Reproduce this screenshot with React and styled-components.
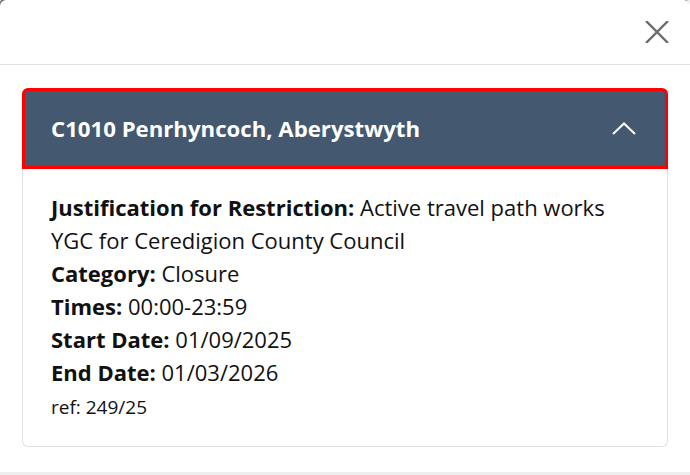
import React from "react";
import styled, { createGlobalStyle } from "styled-components";

const GlobalStyle = createGlobalStyle`
  html, body {
    margin: 0;
    padding: 0;
    background: #eceef0;
  }
  body {
    font-family: "Open Sans", "Noto Sans", sans-serif;
    color: #111;
  }
`;

const Modal = styled.div`
  width: 690px;
  height: 472px;
  background: #fff;
  border-radius: 6px 6px 0 0;
  box-shadow: -1px -1px 0 #666;
  overflow: hidden;
`;

const ModalHeader = styled.div`
  height: 65px;
  border-bottom: 1px solid #dee2e6;
  display: flex;
  align-items: center;
  justify-content: flex-end;
  padding: 0 19px 0 0;
  box-sizing: border-box;
`;

const CloseButton = styled.button`
  width: 28px;
  height: 28px;
  border: none;
  background: none;
  padding: 0;
  display: flex;
  align-items: center;
  justify-content: center;
  cursor: pointer;
`;

const ModalBody = styled.div`
  padding: 23px 22px 0 22px;
`;

const Card = styled.section`
  display: flex;
  flex-direction: column;
`;

const CardHeader = styled.div`
  height: 81px;
  box-sizing: border-box;
  border: 3px solid #ff0000;
  border-radius: 6px 6px 0 0;
  background: #44586f;
  color: #fff;
  display: flex;
  align-items: center;
  justify-content: space-between;
  padding: 0 29px 0 26px;
`;

const Title = styled.h2`
  margin: 0;
  font-size: 22.2px;
  font-weight: 700;
  letter-spacing: 0;
`;

const CardBody = styled.div`
  border: 1px solid #dee2e6;
  border-top: none;
  border-radius: 0 0 6px 6px;
  padding: 22px 26px 25px 28px;
  height: 278px;
  box-sizing: border-box;
`;

const Line = styled.p`
  margin: 0;
  font-size: 22px;
  line-height: 33px;
  color: #111;
`;

const Label = styled.strong`
  font-weight: 700;
`;

const Ref = styled.p`
  margin: 0;
  font-size: 19px;
  line-height: 36px;
  color: #111;
`;

const XIcon = () => (
  <svg width="24" height="22" viewBox="0 0 24 22">
    <path d="M1 0 L23 22 M23 0 L1 22" stroke="#6b6b6b" strokeWidth="2.4" fill="none" />
  </svg>
);

const ChevronUp = () => (
  <svg width="24" height="13" viewBox="0 0 24 13">
    <path d="M1 12 L12 1.5 L23 12" stroke="#fff" strokeWidth="2" fill="none" />
  </svg>
);

const details = [
  ["Category:", "Closure"],
  ["Times:", "00:00-23:59"],
  ["Start Date:", "01/09/2025"],
  ["End Date:", "01/03/2026"],
];

export default function App() {
  return (
    <>
      <GlobalStyle />
      <Modal>
        <ModalHeader>
          <CloseButton aria-label="Close">
            <XIcon />
          </CloseButton>
        </ModalHeader>
        <ModalBody>
          <Card>
            <CardHeader>
              <Title>C1010 Penrhyncoch, Aberystwyth</Title>
              <ChevronUp />
            </CardHeader>
            <CardBody>
              <Line>
                <Label>Justification for Restriction:</Label> Active travel path works
                YGC for Ceredigion County Council
              </Line>
              {details.map(([label, value]) => (
                <Line key={label}>
                  <Label>{label}</Label> {value}
                </Line>
              ))}
              <Ref>ref: 249/25</Ref>
            </CardBody>
          </Card>
        </ModalBody>
      </Modal>
    </>
  );
}
